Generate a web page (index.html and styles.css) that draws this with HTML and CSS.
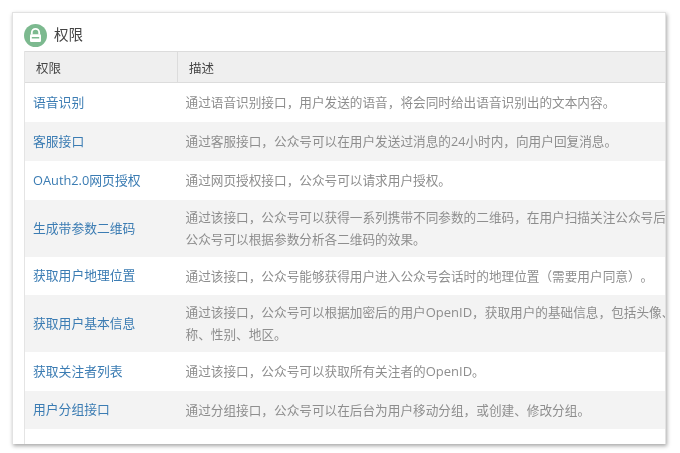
FILE: index.html
```html
<!DOCTYPE html>
<html lang="zh-CN">
<head>
<meta charset="utf-8">
<title>权限</title>
<link rel="stylesheet" href="styles.css">
</head>
<body>
<section class="card">
  <h2 class="title">
    <svg class="lock" width="23" height="23" viewBox="0 0 23 23" aria-hidden="true">
      <circle cx="11.5" cy="11.5" r="11.5" fill="#7cb98f"/>
      <path d="M7.8 10.5V8.6a3.7 3.7 0 0 1 7.4 0v1.9" fill="none" stroke="#fff" stroke-width="1.8"/>
      <rect x="6" y="10.2" width="11" height="7.8" rx="1.2" fill="#fff"/>
      <rect x="7.8" y="13" width="7.4" height="1.5" fill="#7cb98f"/>
    </svg>
    <span>权限</span>
  </h2>
  <div class="clip">
    <table class="perm">
      <thead>
        <tr><th class="c1">权限</th><th class="c2">描述</th></tr>
      </thead>
      <tbody>
        <tr><td class="c1"><a href="#">语音识别</a></td><td>通过语音识别接口，用户发送的语音，将会同时给出语音识别出的文本内容<span class="sc">。</span></td></tr>
        <tr><td class="c1"><a href="#">客服接口</a></td><td>通过客服接口，公众号可以在用户发送过消息的24小时内，向用户回复消息<span class="sc">。</span></td></tr>
        <tr><td class="c1"><a href="#">OAuth2.0网页授权</a></td><td>通过网页授权接口，公众号可以请求用户授权<span class="sc">。</span></td></tr>
        <tr class="tall"><td class="c1"><a href="#">生成带参数二维码</a></td><td>通过该接口，公众号可以获得一系列携带不同参数的二维码，在用户扫描关注公众号后，<br>公众号可以根据参数分析各二维码的效果<span class="sc">。</span></td></tr>
        <tr class="short"><td class="c1"><a href="#">获取用户地理位置</a></td><td>通过该接口，公众号能够获得用户进入公众号会话时的地理位置（需要用户同意）<span class="sc">。</span></td></tr>
        <tr class="tall"><td class="c1"><a href="#">获取用户基本信息</a></td><td>通过该接口，公众号可以根据加密后的用户<span class="en">OpenID</span>，获取用户的基础信息，包括头像<span class="sc">、</span>昵<br>称<span class="sc">、</span>性别<span class="sc">、</span>地区<span class="sc">。</span></td></tr>
        <tr><td class="c1"><a href="#">获取关注者列表</a></td><td>通过该接口，公众号可以获取所有关注者的<span class="en">OpenID</span><span class="sc">。</span></td></tr>
        <tr class="short"><td class="c1"><a href="#">用户分组接口</a></td><td>通过分组接口，公众号可以在后台为用户移动分组，或创建<span class="sc">、</span>修改分组<span class="sc">。</span></td></tr>
        <tr><td class="c1"></td><td></td></tr>
      </tbody>
    </table>
  </div>
</section>
</body>
</html>
```
FILE: styles.css
```css
html, body {
  margin: 0;
  padding: 0;
  background: #fff;
}
body {
  height: 453px;
  overflow: hidden;
  padding: 12px 0 0 12px;
  box-sizing: border-box;
  font-family: "Open Sans", "Noto Sans CJK TC", sans-serif;
  text-spacing-trim: space-all;
}
.card {
  width: 654px;
  height: 432px;
  box-sizing: border-box;
  border: 1px solid #e2e2e2;
  border-bottom: 0;
  background: #fff;
  box-shadow: 1px 2px 4px rgba(0, 0, 0, 0.35);
  padding: 0 0 0 11px;
  overflow: hidden;
  display: flex;
  flex-direction: column;
  filter: blur(0.35px);
}
.title {
  display: flex;
  align-items: center;
  gap: 7px;
  height: 38px;
  box-sizing: border-box;
  padding-top: 6px;
  margin: 0;
  font-size: 14.5px;
  line-height: 20px;
  font-weight: 400;
  color: #444;
  flex: none;
}
.lock {
  flex: none;
}
.clip {
  flex: 1;
  overflow: hidden;
  border-left: 1px solid #e4e4e4;
}
.perm {
  width: 760px;
  border-collapse: collapse;
  table-layout: fixed;
  font-size: 12.65px;
}
.perm th {
  height: 30px;
  background: #efefef;
  border-top: 1px solid #dcdcdc;
  border-bottom: 1px solid #dcdcdc;
  font-weight: 400;
  font-size: 12.5px;
  color: #444;
  text-align: left;
  padding: 0 0 0 11px;
}
.perm th.c1 {
  border-right: 1px solid #dcdcdc;
  width: 141px;
}
.perm td {
  height: 39px;
  padding: 0 0 0 8px;
  color: #8e8e8e;
  line-height: 21px;
  white-space: nowrap;
  box-sizing: border-box;
}
.perm td.c1 {
  font-size: 12.8px;
}
.perm tbody tr:nth-child(even) td {
  background: #f3f3f3;
}
.perm tr.tall td {
  height: 57px;
}
.perm tr.short td {
  height: 38px;
}
.perm a {
  color: #3b7cb3;
  text-decoration: none;
}
.sc {
  font-family: "Noto Sans CJK SC", sans-serif;
}
.en {
  font-size: 13px;
}
```
